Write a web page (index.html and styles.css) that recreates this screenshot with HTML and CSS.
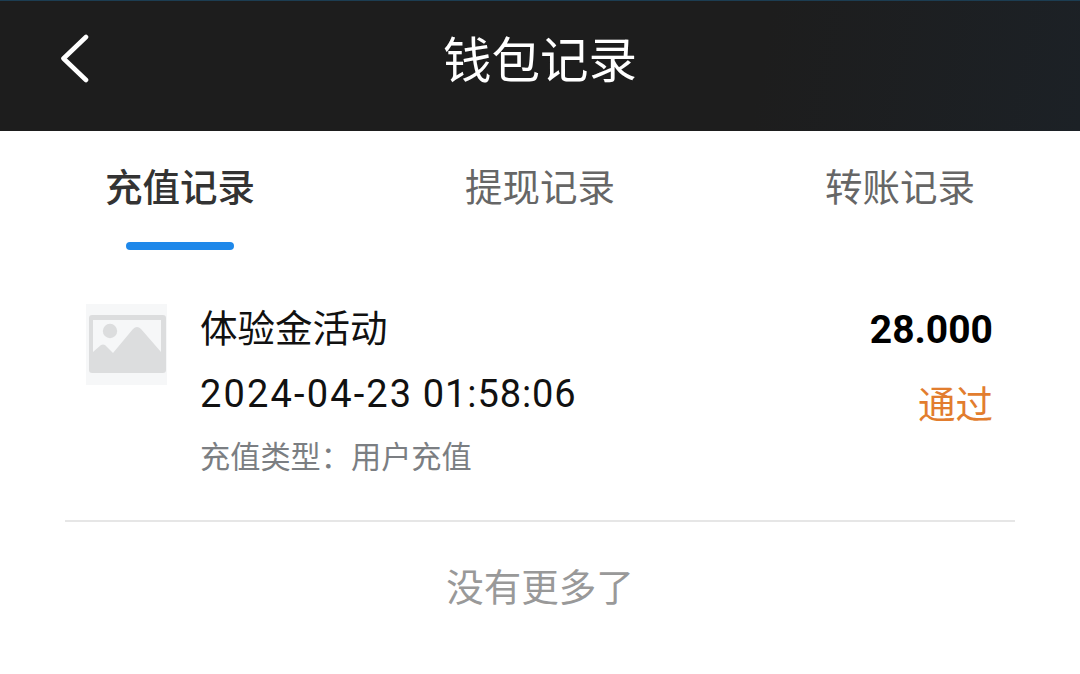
FILE: index.html
```html
<!DOCTYPE html>
<html lang="zh-CN">
<head>
<meta charset="utf-8">
<title>钱包记录</title>
<link rel="stylesheet" href="styles.css">
</head>
<body>
<header class="topbar">
  <button class="back" aria-label="返回">
    <svg width="30" height="50" viewBox="0 0 30 50"><path d="M26 3 L3.500 24.500 L26 46" fill="none" stroke="#fff" stroke-width="4.600" stroke-linecap="round" stroke-linejoin="round"/></svg>
  </button>
  <h1 class="title">钱包记录</h1>
</header>
<nav class="tabs">
  <div class="tab active"><span class="tab-label">充值记录</span><i class="tab-bar"></i></div>
  <div class="tab"><span class="tab-label">提现记录</span></div>
  <div class="tab"><span class="tab-label">转账记录</span></div>
</nav>
<section class="record">
  <div class="thumb">
    <svg width="81" height="81" viewBox="0 0 81 81">
      <rect width="81" height="81" fill="#f6f7f8"/>
      <rect x="3" y="11" width="77" height="58" rx="3" fill="#dcddde"/>
      <rect x="7" y="16" width="68" height="36" fill="#f6f7f8"/>
      <circle cx="24" cy="27" r="7.200" fill="#dcddde"/>
      <path d="M7 48 L15 41 Q17 40 19 41 L27 49 L47 25 Q51 21 55 25 L75 48 L75 60 L7 60 Z" fill="#dcddde"/>
    </svg>
  </div>
  <div class="info">
    <div class="name">体验金活动</div>
    <div class="time"><span class="time-date">2024-04-23</span> <span class="time-clock">01:58:06</span></div>
    <div class="type">充值类型：用户充值</div>
  </div>
  <div class="side">
    <div class="amount">28.000</div>
    <div class="status">通过</div>
  </div>
</section>
<footer class="nomore">没有更多了</footer>
</body>
</html>
```
FILE: styles.css
```css
* { box-sizing: border-box; }
html, body { margin: 0; padding: 0; }
body {
  width: 1080px;
  height: 674px;
  overflow: hidden;
  background: #fff;
  font-family: "Roboto", "Noto Sans CJK SC", sans-serif;
}
.topbar {
  height: 131px;
  background: linear-gradient(100deg, #1d1d1d 70%, #1c2126 100%);
  border-top: 1px solid #1c3d52;
  display: grid;
  grid-template-columns: 1fr auto 1fr;
  align-items: center;
}
.back {
  border: 0;
  padding: 0 0 0 60px;
  background: none;
  display: flex;
  margin-top: -15px;
}
.title {
  margin: 0;
  margin-top: -8px;
  color: #fff;
  font-size: 48.5px;
  font-weight: 400;
  line-height: 60px;
}
.tabs {
  display: grid;
  grid-template-columns: repeat(3, 1fr);
  height: 119px;
}
.tab {
  display: flex;
  flex-direction: column;
  align-items: center;
  padding-top: 32px;
  color: #666;
  font-size: 37.5px;
}
.tab-label { line-height: 50px; }
.tab.active { color: #333; font-weight: 500; }
.tab-bar {
  width: 108px;
  height: 8px;
  margin-top: 29px;
  border-radius: 4px;
  background: #1e88ea;
}
.record {
  margin: 0 65px;
  padding: 54px 22px 0 21px;
  height: 272px;
  border-bottom: 2px solid #e6e6e6;
  display: flex;
  align-items: flex-start;
}
.thumb { width: 81px; height: 81px; flex: none; }
.thumb svg { display: block; }
.info { margin-left: 33px; flex: 1; }
.name { font-size: 37.5px; line-height: 50px; color: #111; }
.time { font-size: 38px; line-height: 50px; margin-top: 15px; color: #111; }
.time-date { letter-spacing: 2.15px; }
.time-clock { letter-spacing: 0.9px; }
.type { font-size: 30.2px; line-height: 40px; margin-top: 19px; color: #7b7e82; }
.side { text-align: right; padding-top: 1px; }
.amount { font-size: 39px; line-height: 50px; font-weight: 700; color: #000; }
.status { font-size: 37.5px; line-height: 50px; margin-top: 25px; color: #e27d2e; }
.nomore {
  padding-top: 41px;
  text-align: center;
  font-size: 37.5px;
  line-height: 50px;
  color: #999;
}
```
